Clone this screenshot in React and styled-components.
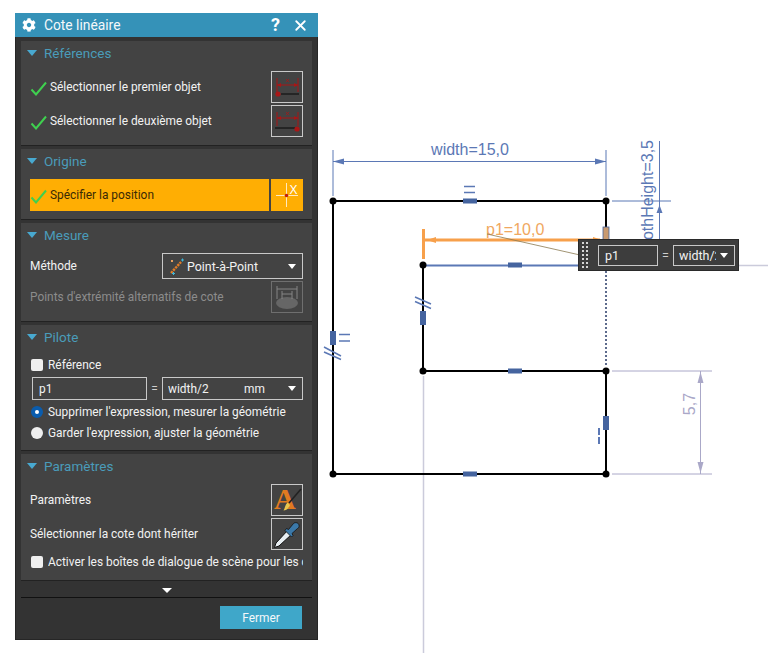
import styled, { createGlobalStyle } from "styled-components";
import { FaCog } from "react-icons/fa";
import { X } from "lucide-react";

const GlobalStyle = createGlobalStyle`
  html, body {
    margin: 0;
    padding: 0;
    background: #fff;
  }
`;

const Page = styled.div`
  position: relative;
  display: flex;
  align-items: flex-start;
  width: 768px;
  height: 653px;
  overflow: hidden;
  font-family: Roboto, "Open Sans", sans-serif;
  font-size: 11.9px;
  color: #f2f2f2;
`;

const Dialog = styled.div`
  flex: none;
  width: 303px;
  height: 627px;
  margin: 13px 0 0 15px;
  background: #333;
  box-shadow: inset 0 0 0 1px #262626;
  display: flex;
  flex-direction: column;
`;

const TitleBar = styled.div`
  height: 24px;
  flex: none;
  background: #3592b8;
  display: flex;
  align-items: center;
  padding: 0 9px 0 7px;
  color: #fff;
`;

const TitleText = styled.div`
  margin-left: 8px;
  font-size: 13.8px;
  flex: 1;
  color: #f4f8fa;
`;

const Help = styled.span`
  font-size: 18px;
  font-weight: 700;
  margin-right: 12px;
  line-height: 1;
`;

const Sections = styled.div`
  display: flex;
  flex-direction: column;
  gap: 4px;
  padding: 4px 6px 0;
`;

const Section = styled.section`
  background: #434343;
  box-shadow: 0 1px 0 #222;
  padding: 0 9px 8px;
  height: ${({ $h }) => $h}px;
  box-sizing: border-box;
`;

const SectionHead = styled.div`
  height: 24px;
  margin-bottom: 6px;
  display: flex;
  align-items: center;
  margin-left: -3px;
  color: #4a9cba;
  font-size: 13.5px;
`;

const Triangle = styled.span`
  width: 0;
  height: 0;
  margin-right: 7px;
  border-left: 5.5px solid transparent;
  border-right: 5.5px solid transparent;
  border-top: 6px solid #48a9d0;
`;

const Row = styled.div`
  display: flex;
  align-items: center;
  height: ${({ $h }) => $h || 32}px;
  margin-bottom: ${({ $gap }) => $gap || 0}px;
`;

const Label = styled.div`
  flex: 1;
  min-width: 0;
  white-space: nowrap;
  overflow: hidden;
  color: ${({ $muted, $dark }) => ($dark ? "#3a2a05" : $muted ? "#8c8c8c" : "#f2f2f2")};
`;

const CheckSvg = styled.svg`
  flex: none;
  width: 17px;
  height: 15px;
  margin: 2px 3px 0 0;
`;

const OrangeRow = styled.div`
  flex: 1;
  height: 32px;
  margin-right: 2px;
  display: flex;
  align-items: center;
  background: #ffae03;
`;

const IconBox = styled.div`
  flex: none;
  width: 32px;
  height: 32px;
  box-sizing: border-box;
  display: flex;
  align-items: center;
  justify-content: center;
  border: 1px solid ${({ $muted }) => ($muted ? "#6f6f6f" : "#c9c9c9")};
  background: ${({ $fill }) => $fill || "transparent"};
  ${({ $fill }) => $fill && "border: 0;"}
`;

const Select = styled.div`
  box-sizing: border-box;
  width: ${({ $w }) => $w || 141}px;
  height: ${({ $h }) => $h || 26}px;
  flex: none;
  display: flex;
  align-items: center;
  padding: 0 5px;
  border: 1px solid #c9c9c9;
  white-space: nowrap;
  overflow: hidden;
`;

const SelectText = styled.span`
  margin-left: ${({ $ml }) => $ml || 0}px;
  font-size: 12.4px;
`;

const SelectValue = styled.span`
  width: ${({ $w }) => $w}px;
  overflow: hidden;
  flex: none;
`;

const Caret = styled.span`
  flex: none;
  margin-left: auto;
  margin-right: 1px;
  width: 0;
  height: 0;
  border-left: 4.5px solid transparent;
  border-right: 4.5px solid transparent;
  border-top: 5px solid #fff;
`;

const Input = styled.div`
  box-sizing: border-box;
  width: ${({ $w }) => $w}px;
  height: ${({ $h }) => $h}px;
  margin-left: ${({ $ml }) => $ml || 0}px;
  flex: none;
  display: flex;
  align-items: center;
  padding: 0 6px;
  border: 1px solid #c9c9c9;
`;

const Equals = styled.span`
  flex: none;
  width: 15px;
  text-align: center;
  color: #cfcfcf;
`;

const CheckBox = styled.span`
  flex: none;
  width: 12px;
  height: 12px;
  border-radius: 2px;
  margin: 0 5px 0 1px;
  background: #efefef;
`;

const Radio = styled.span`
  flex: none;
  box-sizing: border-box;
  width: 12px;
  height: 12px;
  border-radius: 50%;
  margin: 0 5px 0 1px;
  background: ${({ $on }) => ($on ? "#fff" : "#efefef")};
  border: ${({ $on }) => ($on ? "4px solid #0a5cad" : "0")};
`;

const Expander = styled.div`
  flex: none;
  height: 18px;
  margin: 0 6px;
  border-bottom: 1px solid #111;
  display: flex;
  align-items: flex-end;
  justify-content: center;
  padding-bottom: 4px;
  box-sizing: border-box;
`;

const ExpanderArrow = styled.span`
  width: 0;
  height: 0;
  border-left: 5px solid transparent;
  border-right: 5px solid transparent;
  border-top: 5px solid #fff;
`;

const Footer = styled.div`
  display: flex;
  justify-content: flex-end;
  padding: 8px 16px 0 0;
`;

const CloseButton = styled.div`
  width: 82px;
  height: 23px;
  background: #3fa7c9;
  display: flex;
  align-items: center;
  justify-content: center;
  color: #f4f8fa;
`;

const Sketch = styled.svg`
  flex: none;
  display: block;
  width: 450px;
  height: 653px;
  font-family: "Liberation Sans", Arial, sans-serif;
`;

const ScenePopup = styled.div`
  position: absolute;
  left: 578px;
  top: 239px;
  width: 161px;
  height: 32px;
  box-sizing: border-box;
  padding-left: 3px;
  background: #3d3d3d;
  box-shadow: inset 0 0 0 1px #2a2a2a;
  display: flex;
  align-items: center;
  font-size: 12.5px;
`;

const Grip = styled.div`
  width: 8px;
  height: 28px;
  margin-right: 9px;
  background-image: radial-gradient(circle, #d5d5d5 1px, transparent 1.2px);
  background-size: 4px 4px;
`;

function CheckMark() {
  return (
    <CheckSvg viewBox="0 0 17 15">
      <path d="M1.5 8.5L6 13.5L16 1.5" stroke="#3fd04f" strokeWidth="2" fill="none" />
    </CheckSvg>
  );
}

function DimIcon({ dotRight }) {
  const y = dotRight ? 12 : 13;
  return (
    <svg width="30" height="30" viewBox="0 0 30 30">
      <path d={`M5 6V20M26 6V20M5 ${y}H26`} stroke="#a81616" fill="none" />
      <path d={`M5 ${y}l4-2v4zM26 ${y}l-4-2v4z`} fill="#a81616" />
      <path d={`M14 ${y - 6}l3 3M17 ${y - 6}l-3 3`} stroke="#a81616" strokeWidth="0.8" />
      {dotRight ? (
        <>
          <path d="M3 22H24" stroke="#111" strokeWidth="1.2" />
          <circle cx="25" cy="23" r="2.6" fill="#a81616" />
        </>
      ) : (
        <>
          <path d="M9 22H27" stroke="#111" strokeWidth="1.2" />
          <circle cx="6" cy="22" r="2.6" fill="#a81616" />
        </>
      )}
    </svg>
  );
}

function OriginIcon() {
  return (
    <svg width="32" height="32" viewBox="0 0 32 32">
      <path d="M5 16.5H27M15.5 4V28" stroke="#ffe9c0" strokeWidth="1" />
      <circle cx="15.5" cy="16.5" r="1.8" fill="#c0200f" />
      <text x="18.5" y="14.5" fontSize="12" fill="#fff" fontFamily="Liberation Sans">X</text>
    </svg>
  );
}

function AltPointsIcon() {
  return (
    <svg width="30" height="30" viewBox="0 0 30 30">
      <ellipse cx="15" cy="21" rx="11" ry="6" fill="#666" />
      <path d="M5 4V17M25 4V17M5 7H25M10 9V17M20 9V17M10 12H20" stroke="#858585" fill="none" />
    </svg>
  );
}

function MethodIcon() {
  return (
    <svg width="17" height="19" viewBox="0 0 17 19">
      <path d="M3 16L13 5" stroke="#e07c28" strokeWidth="2.4" strokeDasharray="2.4 0.8" />
      <path d="M3 3l2 2M5 3l-2 2" stroke="#e8a060" />
      <path d="M13 3h3M14.5 1.5v3M4 16.5h3M5.5 15v3" stroke="#3fb6d8" />
    </svg>
  );
}

function StyleIcon() {
  return (
    <svg width="30" height="30" viewBox="0 0 30 30">
      <text x="2" y="24" fontSize="30" fontWeight="700" fontFamily="Liberation Serif" fill="#e07a20">A</text>
      <path d="M29 4L17 18" stroke="#222" strokeWidth="1.6" />
      <path d="M15.500 17.500l2.500 2.500c-1 3-3 5-6.500 5.500 1.500-2 1.500-5.500 4-8z" fill="#e8c64e" />
    </svg>
  );
}

function PipetteIcon() {
  return (
    <svg width="30" height="30" viewBox="0 0 30 30">
      <path d="M2.5 28.5l1.5-4.5L16 11l4 4L7 27z" fill="#e8eef2" stroke="#111" />
      <path d="M14.5 9.5l2 1 5-6c1.500-1.500 5-1 5.500 1.500 0.500 2-0.500 3-1.500 3.500l-5.500 5 1 2-1.500 1.500-6.500-6.500z" fill="#3b78a8" stroke="#111" strokeWidth="0.8" />
    </svg>
  );
}

function SketchDrawing() {
  const blue = "#5b78b5";
  const mark = "#45649f";
  const pale = "#aaa8c8";
  const points = [[333, 201], [606, 201], [423, 265], [423, 371], [606, 371], [333, 474], [606, 474]];
  const hMarks = [[470, 201], [515, 265], [515, 371], [470, 474]];
  const vMarks = [[333, 338], [423, 318], [606, 423]];

  return (
    <Sketch viewBox="318 0 450 653">
      {/* pale reference lines */}
      <path d="M423.500 376V653M739 265.500H768" stroke="#cbcbdb" strokeWidth="1.5" fill="none" />

      {/* width dimension */}
      <path d="M333 150V196M606 150V196M333 161.500H606" stroke={blue} fill="none" />
      <path d="M333 161.500l11-3v6zM606 161.500l-11-3v6z" fill={blue} />
      <text x="470" y="155" textAnchor="middle" fontSize="16" fill={blue}>width=15,0</text>
      <path d="M464 186.500H475M464 192.500H475" stroke={blue} strokeWidth="1.6" />

      {/* height dimension */}
      <path d="M612 201H671M659.500 141V240" stroke={blue} fill="none" />
      <path d="M659.500 205l-3 8h6z" fill={blue} />
      <text transform="translate(653 140) rotate(-90)" textAnchor="end" fontSize="16" fill={blue}>smoothHeight=3,5</text>

      {/* 5,7 dimension */}
      <path d="M612 371H712M612 474H712M700.500 371V474" stroke={pale} fill="none" />
      <path d="M700.500 372l-3 11h6zM700.500 473l-3-11h6z" fill={pale} />
      <text transform="translate(695 404) rotate(-90)" textAnchor="middle" fontSize="16" fill={pale}>5,7</text>

      {/* profile */}
      <path d="M606 201H333V474H606V371H423V265" stroke="#000" strokeWidth="2" fill="none" />
      <path d="M606 201V240" stroke="#000" strokeWidth="2" />
      <path d="M423 265.500H580" stroke={blue} strokeWidth="2" />
      <path d="M606 271V366" stroke="#5c6a8c" strokeWidth="2" strokeDasharray="2 2" />

      {/* constraint marks */}
      {hMarks.map(([x, y]) => (
        <rect key={`h${x}${y}`} x={x - 7} y={y - 2.5} width="14" height="5" fill={mark} />
      ))}
      {vMarks.map(([x, y]) => (
        <rect key={`v${x}${y}`} x={x - 3} y={y - 7} width="6" height="14" fill={mark} />
      ))}
      <path d="M339 334.500H350M339 341H350" stroke={blue} strokeWidth="1.6" />
      <path d="M324 347L341 356M324 352L341 359.500" stroke={blue} strokeWidth="1.5" />
      <path d="M415 297L431 304M415 301.500L431 308.500" stroke={blue} strokeWidth="1.5" />
      <path d="M599 428V435M599 437V444" stroke={blue} strokeWidth="2" />

      {/* active p1 dimension */}
      <rect x="603" y="227" width="6" height="15" fill="#c99a6f" stroke={mark} strokeWidth="0.8" />
      <path d="M423.500 229V259" stroke="#f7a04b" strokeWidth="3" />
      <path d="M423 240H600" stroke="#f7a04b" strokeWidth="3" />
      <path d="M427 240l9-3v6zM602 240l-9-3v6z" fill="#f7a04b" />
      <text x="486" y="235" fontSize="16" fill="#f0a860">p1=10,0</text>
      <path d="M487 234L580 255" stroke="#8a7a50" strokeWidth="0.8" />

      {points.map(([x, y]) => (
        <circle key={`${x}-${y}`} cx={x} cy={y} r="3.5" fill="#000" />
      ))}
    </Sketch>
  );
}

export default function App() {
  return (
    <Page>
      <GlobalStyle />
      <Dialog>
        <TitleBar>
          <FaCog size={14} />
          <TitleText>Cote linéaire</TitleText>
          <Help>?</Help>
          <X size={17} strokeWidth={2.6} />
        </TitleBar>
        <Sections>
          <Section $h={104}>
            <SectionHead><Triangle />Références</SectionHead>
            <Row $gap={2}>
              <CheckMark />
              <Label>Sélectionner le premier objet</Label>
              <IconBox><DimIcon /></IconBox>
            </Row>
            <Row>
              <CheckMark />
              <Label>Sélectionner le deuxième objet</Label>
              <IconBox><DimIcon dotRight /></IconBox>
            </Row>
          </Section>
          <Section $h={70}>
            <SectionHead><Triangle />Origine</SectionHead>
            <Row>
              <OrangeRow>
                <CheckMark />
                <Label $dark>Spécifier la position</Label>
              </OrangeRow>
              <IconBox $fill="#ffae03"><OriginIcon /></IconBox>
            </Row>
          </Section>
          <Section $h={98}>
            <SectionHead><Triangle />Mesure</SectionHead>
            <Row $h={26} $gap={2}>
              <Label>Méthode</Label>
              <Select>
                <MethodIcon />
                <SelectText $ml={2}>Point-à-Point</SelectText>
                <Caret />
              </Select>
            </Row>
            <Row>
              <Label $muted>Points d'extrémité alternatifs de cote</Label>
              <IconBox $muted><AltPointsIcon /></IconBox>
            </Row>
          </Section>
          <Section $h={125}>
            <SectionHead><Triangle />Pilote</SectionHead>
            <Row $h={20} $gap={2}>
              <CheckBox />
              <Label>Référence</Label>
            </Row>
            <Row $h={23} $gap={1}>
              <Input $w={115} $h={23} $ml={2}>p1</Input>
              <Equals>=</Equals>
              <Select $h={23}>
                <SelectValue $w={76}>width/2</SelectValue>
                mm
                <Caret />
              </Select>
            </Row>
            <Row $h={21}>
              <Radio $on />
              <Label>Supprimer l'expression, mesurer la géométrie</Label>
            </Row>
            <Row $h={21}>
              <Radio />
              <Label>Garder l'expression, ajuster la géométrie</Label>
            </Row>
          </Section>
          <Section $h={126}>
            <SectionHead><Triangle />Paramètres</SectionHead>
            <Row $gap={2}>
              <Label>Paramètres</Label>
              <IconBox><StyleIcon /></IconBox>
            </Row>
            <Row $gap={2}>
              <Label>Sélectionner la cote dont hériter</Label>
              <IconBox><PipetteIcon /></IconBox>
            </Row>
            <Row $h={20}>
              <CheckBox />
              <Label>Activer les boîtes de dialogue de scène pour les cotes</Label>
            </Row>
          </Section>
        </Sections>
        <Expander><ExpanderArrow /></Expander>
        <Footer><CloseButton>Fermer</CloseButton></Footer>
      </Dialog>
      <SketchDrawing />
      <ScenePopup>
        <Grip />
        <Input $w={60} $h={21}>p1</Input>
        <Equals>=</Equals>
        <Select $w={62} $h={21}>
          <SelectValue $w={37}>width/2</SelectValue>
          <Caret />
        </Select>
      </ScenePopup>
    </Page>
  );
}
